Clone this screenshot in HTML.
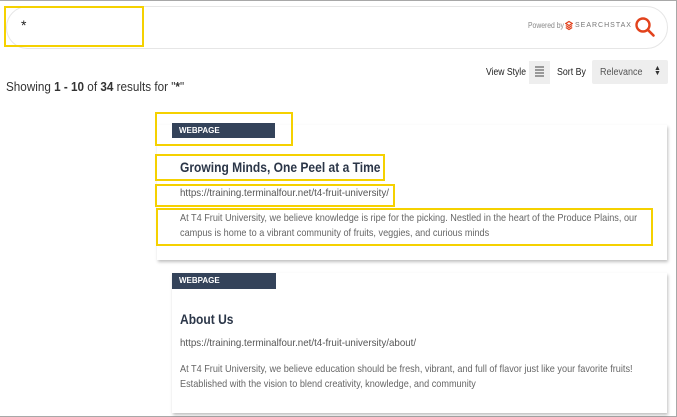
<!DOCTYPE html>
<html><head><style>
*{margin:0;padding:0;box-sizing:border-box}
body{width:677px;height:417px;overflow:hidden;background:#fff;font-family:"Liberation Sans",sans-serif;position:relative;color:#333}
.frame{position:absolute;left:0;top:0;width:677px;height:417px;border:1px solid #a8a8a8;border-left:none}
.a{position:absolute;white-space:nowrap}
.s{transform-origin:0 0}
.y{position:absolute;border:2px solid #f5d100}
.card{position:absolute;background:#fff;box-shadow:1px 2px 3px rgba(0,0,0,.25)}
.badge{position:absolute;background:#34435a;color:#fff;font-size:8px;font-weight:bold;padding:3px 0 0 7px}
.t{position:absolute;font-size:14px;font-weight:bold;color:#2b3648;white-space:nowrap;transform:scaleX(0.86);transform-origin:0 0}
.u{position:absolute;font-size:10.5px;color:#555;white-space:nowrap;transform:scaleX(0.93);transform-origin:0 0}
.d{position:absolute;font-size:10.5px;color:#666;line-height:15px;white-space:nowrap;transform:scaleX(0.87);transform-origin:0 0}
</style></head><body>
<div class="frame"></div>
<div class="a" style="left:6px;top:6px;width:662px;height:43px;border:1px solid #e6e6e6;border-radius:22px"></div>
<div class="y" style="left:4px;top:6px;width:140px;height:41px"></div>
<div class="a" style="left:21px;top:17px;font-size:14px;color:#222">*</div>
<div class="a s" style="left:528px;top:21px;font-size:8px;color:#888;transform:scaleX(0.85)">Powered by</div>
<svg class="a" style="left:565px;top:20px" width="8" height="11" viewBox="0 0 10 12"><path d="M5 1L9 3.5 5 6 1 3.5Z M1 6L5 8.5 9 6 M1 8.5L5 11 9 8.5" fill="none" stroke="#e2421c" stroke-width="1.5"/></svg>
<div class="a" style="left:575px;top:22px;font-size:7px;color:#777;letter-spacing:1px">SEARCHSTAX</div>
<svg class="a" style="left:634px;top:16px" width="22" height="22" viewBox="0 0 22 22"><circle cx="9" cy="9" r="6.5" fill="none" stroke="#e2421c" stroke-width="2.4"/><path d="M13.8 13.8L19.5 19.5" stroke="#e2421c" stroke-width="2.6" stroke-linecap="round"/></svg>
<div class="a s" style="left:486px;top:67px;font-size:10px;color:#222;transform:scaleX(0.86)">View Style</div>
<div class="a" style="left:529px;top:61px;width:21px;height:23px;background:#eee"></div>
<div class="a" style="left:535px;top:66px;width:9px;height:2px;background:#999;box-shadow:0 3px #999,0 6px #999,0 9px #999"></div>
<div class="a s" style="left:557px;top:67px;font-size:10px;color:#222;transform:scaleX(0.88)">Sort By</div>
<div class="a" style="left:592px;top:60px;width:76px;height:24px;background:#eee;border-radius:2px"></div>
<div class="a s" style="left:600px;top:67px;font-size:10px;color:#555;transform:scaleX(0.9)">Relevance</div>
<div class="a" style="left:654px;top:66px;font-size:7px;color:#333;line-height:5px">▲<br>▼</div>
<div class="a s" style="left:6px;top:79px;font-size:13px;color:#333;transform:scaleX(0.9)">Showing <b>1 - 10</b> of <b>34</b> results for "<b>*</b>"</div>

<div class="card" style="left:157px;top:125px;width:510px;height:135px"></div>
<div class="badge" style="left:172px;top:123px;width:103px;height:15px">WEBPAGE</div>
<div class="y" style="left:155px;top:112px;width:138px;height:34px"></div>
<div class="t" style="left:180px;top:159px">Growing Minds, One Peel at a Time</div>
<div class="y" style="left:155px;top:154px;width:230px;height:27px"></div>
<div class="u" style="left:180px;top:187px">https://training.terminalfour.net/t4-fruit-university/</div>
<div class="y" style="left:155px;top:184px;width:240px;height:23px"></div>
<div class="d" style="left:180px;top:211px">At T4 Fruit University, we believe knowledge is ripe for the picking. Nestled in the heart of the Produce Plains, our<br>campus is home to a vibrant community of fruits, veggies, and curious minds</div>
<div class="y" style="left:156px;top:208px;width:497px;height:38px"></div>

<div class="card" style="left:172px;top:273px;width:495px;height:140px"></div>
<div class="badge" style="left:172px;top:273px;width:104px;height:16px">WEBPAGE</div>
<div class="t" style="left:180px;top:311px">About Us</div>
<div class="u" style="left:180px;top:337px">https://training.terminalfour.net/t4-fruit-university/about/</div>
<div class="d" style="left:180px;top:362px">At T4 Fruit University, we believe education should be fresh, vibrant, and full of flavor just like your favorite fruits!<br>Established with the vision to blend creativity, knowledge, and community</div>
</body></html>
